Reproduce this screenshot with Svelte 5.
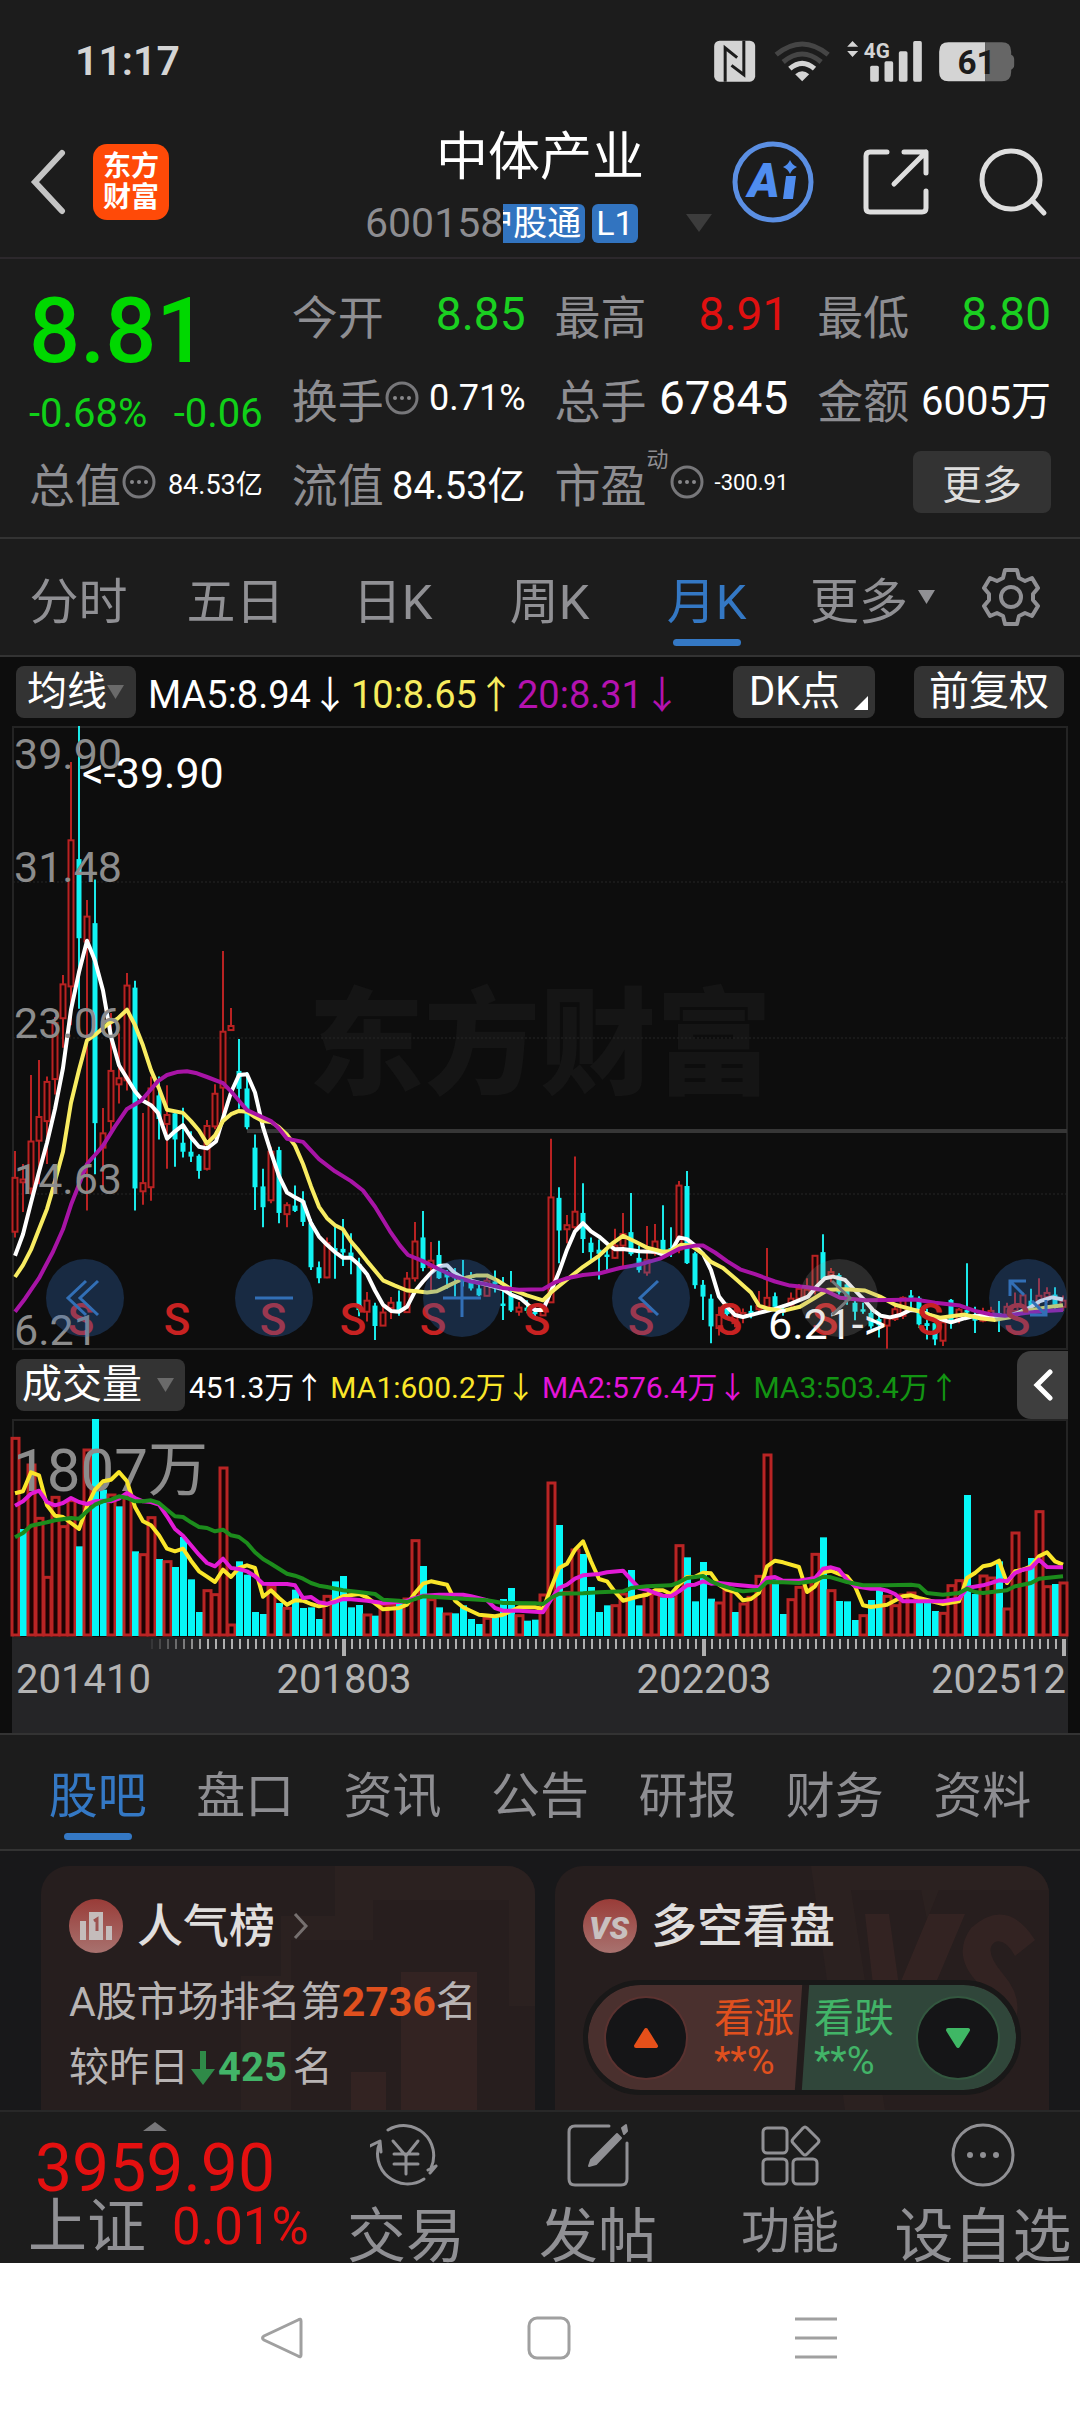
<script>
  const STEP = 8;
  const X0 = 15;
  const xAt = (i) => X0 + i * STEP;

  // Levels are stored in ticks measured down from the top of each pane.
  const priceY = (v) => (v - 17) / 2.45;
  const volumeY = (v) => (v - 243) / 3;

  // One entry per month: direction, high, body top, body bottom, low.
  const candles = `
u 1058 1124 1256 1270|u 1090 1128 1135 1208|u 872 1035 1150 1165|u 835 975 1033 1140|u 876 889 985 1090|u 730 745 882 920
u 627 650 733 805|u 105 297 655 750|d 17 343 537 710|u 443 484 545 1204|d 393 500 990 1115|u 953 1015 1050 1145
u 720 862 985 1008|u 770 880 895 942|u 622 653 885 910|d 641 658 1150 1204|u 965 1137 1157 1190|u 876 905 1147 1180
d 876 922 980 1030|u 897 970 992 1102|d 960 966 1030 1097|d 952 1038 1060 1074|d 1010 1060 1072 1085|d 1066 1070 1107 1126
u 982 997 1102 1106|u 895 918 998 1005|u 568 766 903 985|u 708 752 762 763|d 784 862 906 955|d 865 905 1000 1005
d 1018 1050 1147 1203|d 1102 1145 1196 1245|u 1048 1060 1179 1186|d 1048 1056 1210 1235|u 1184 1191 1213 1245|d 1143 1192 1205 1208
d 1157 1180 1232 1242|d 1225 1235 1343 1350|d 1329 1343 1370 1382|u 1270 1284 1368 1370|d 1240 1296 1304 1371|d 1225 1298 1307 1340
d 1260 1307 1322 1360|d 1320 1335 1448 1463|u 1404 1425 1452 1476|d 1430 1437 1487 1521|u 1440 1454 1486 1487|u 1416 1430 1443 1470
d 1400 1427 1450 1462|u 1355 1371 1453 1455|u 1232 1280 1370 1378|d 1205 1270 1345 1353|u 1281 1327 1343 1400|d 1278 1313 1370 1372
d 1350 1359 1368 1396|d 1345 1362 1370 1415|d 1325 1366 1378 1390|d 1355 1380 1395 1400|d 1380 1395 1412 1414|u 1368 1376 1413 1414
d 1351 1378 1385 1405|d 1367 1432 1438 1472|d 1352 1409 1449 1453|u 1428 1442 1452 1462|d 1424 1442 1450 1456|d 1440 1452 1458 1463
u 1434 1440 1461 1462|u 1028 1172 1429 1430|d 1147 1173 1253 1333|u 1215 1240 1250 1284|u 1072 1207 1245 1250|d 1137 1210 1274 1308
d 1270 1283 1306 1330|d 1275 1300 1310 1373|d 1300 1312 1318 1350|u 1249 1290 1320 1322|u 1210 1262 1290 1344|d 1161 1257 1311 1315
d 1290 1320 1350 1356|u 1242 1325 1356 1364|u 1237 1280 1308 1315|d 1191 1276 1305 1310|d 1245 1296 1304 1318|u 1132 1143 1300 1309
d 1107 1144 1333 1335|d 1305 1309 1387 1396|d 1374 1386 1415 1472|d 1409 1420 1488 1529|u 1440 1460 1492 1510|d 1430 1440 1458 1470
u 1440 1450 1480 1490|u 1444 1455 1462 1480|d 1437 1450 1460 1468|u 1401 1438 1446 1450|u 1296 1418 1440 1450|d 1405 1414 1440 1445
d 1435 1445 1452 1462|u 1405 1420 1435 1440|u 1384 1396 1420 1425|u 1370 1398 1415 1420|u 1313 1315 1400 1410|d 1262 1306 1372 1375
u 1345 1355 1362 1380|d 1358 1362 1405 1410|d 1375 1385 1425 1435|d 1420 1430 1452 1473|d 1430 1446 1452 1457|d 1438 1455 1488 1494
d 1460 1470 1485 1515|u 1460 1468 1486 1543|u 1436 1446 1470 1475|u 1414 1418 1462 1470|d 1399 1412 1418 1443|d 1414 1418 1483 1492
d 1445 1480 1487 1520|d 1470 1480 1520 1534|u 1470 1478 1523 1536|d 1421 1423 1480 1494|u 1443 1447 1470 1480|d 1333 1448 1454 1464
d 1440 1460 1474 1504|u 1442 1455 1474 1478|u 1440 1450 1465 1470|d 1426 1455 1462 1502|u 1430 1440 1460 1465|u 1405 1440 1450 1460
u 1405 1412 1440 1450|d 1396 1425 1440 1450|u 1370 1413 1425 1450|u 1392 1406 1416 1430|d 1392 1410 1435 1445|u 1412 1425 1440 1450`
    .trim()
    .split(/[|\n]/)
    .map((row, i) => {
      const [dir, high, top, bottom, low] = row.split(' ');
      return {
        x: xAt(i),
        up: dir === 'u',
        high: priceY(+high),
        top: priceY(+top),
        bottom: priceY(+bottom),
        low: priceY(+low)
      };
    });

  const linePath = (points, fx, fy) =>
    points
      .trim()
      .split(/\s+/)
      .map((p) => p.split(',').map(Number))
      .map(([x, v], i) => `${i ? 'L' : 'M'}${fx(x)} ${fy(v).toFixed(1)}`)
      .join('');

  const same = (x) => x;

  const priceLines = [
    { cls: 'white', d: linePath('15,1315 23,1262 31,1185 39,1110 47,1038 55,955 63,855 71,712 79,620 87,543 95,592 103,665 111,778 119,848 127,880 135,912 143,935 151,946 158,965 167,1028 175,1010 183,995 191,1025 199,1048 207,1052 216,1035 223,978 231,915 239,872 247,870 255,915 263,1000 271,1062 279,1120 287,1160 295,1172 303,1182 311,1235 319,1268 327,1288 335,1306 343,1320 351,1320 359,1337 367,1360 375,1400 383,1435 391,1450 399,1452 407,1440 415,1402 423,1378 431,1357 439,1340 447,1338 455,1358 463,1370 471,1376 487,1386 503,1397 511,1410 521,1420 528,1435 535,1448 543,1448 551,1402 559,1355 567,1300 575,1255 583,1235 591,1255 599,1268 607,1285 615,1299 623,1298 639,1304 655,1305 663,1312 671,1305 679,1270 687,1274 695,1290 703,1310 711,1350 719,1415 727,1440 735,1460 743,1465 759,1455 775,1445 791,1432 808,1415 816,1392 825,1370 833,1366 845,1374 855,1400 865,1425 873,1448 881,1462 890,1466 900,1460 910,1448 920,1450 935,1466 951,1478 965,1468 975,1462 990,1462 1005,1464 1018,1455 1030,1442 1040,1426 1052,1417 1063,1422', same, priceY) },
    { cls: 'yellow', d: linePath('15,1367 23,1338 31,1300 39,1250 47,1200 53,1150 63,1060 71,940 79,860 87,787 97,770 109,745 117,735 127,712 135,750 143,800 151,860 159,905 167,957 183,965 191,985 199,1008 207,1040 215,1020 223,985 231,968 239,960 247,962 255,975 263,985 271,987 279,1000 287,1018 295,1045 303,1090 311,1145 319,1195 327,1223 335,1240 343,1250 351,1280 359,1303 367,1328 383,1375 395,1388 407,1400 417,1402 427,1405 437,1402 447,1390 457,1378 467,1368 477,1363 487,1363 497,1375 512,1398 527,1412 543,1424 551,1405 567,1373 583,1342 599,1315 612,1285 623,1266 635,1280 647,1295 663,1305 671,1303 681,1288 691,1290 703,1310 711,1330 723,1345 735,1370 751,1405 759,1437 767,1444 783,1450 800,1440 815,1418 828,1398 845,1397 865,1400 880,1415 895,1435 915,1448 927,1458 940,1467 955,1462 965,1459 980,1468 995,1472 1010,1466 1025,1450 1045,1442 1063,1436', same, priceY) },
    { cls: 'purple', d: linePath('15,1452 25,1420 39,1370 53,1305 63,1250 71,1190 79,1140 87,1090 95,1068 103,1045 115,998 127,955 141,935 150,910 158,887 167,872 177,865 187,863 197,868 207,877 223,892 231,912 239,935 247,958 255,967 271,985 279,1003 287,1028 303,1036 319,1078 335,1108 351,1132 363,1155 375,1195 390,1255 400,1290 408,1313 423,1328 439,1348 455,1366 471,1378 487,1385 503,1394 519,1398 543,1397 555,1380 567,1370 583,1362 600,1358 620,1345 640,1336 660,1322 680,1297 695,1290 703,1290 715,1307 727,1328 740,1348 755,1360 775,1378 790,1388 808,1392 825,1400 840,1418 865,1424 890,1423 915,1422 935,1430 960,1437 975,1450 990,1458 1005,1462 1025,1455 1045,1450 1063,1448', same, priceY) }
  ];

  const volumes = `u298 d573 u378 u538 u715 u475 u563 u485 d625 u333 d243 d455 u468 d505 u470 d640 u647 u536 d663 u668 d687 d597 d724 d822 u755 u767 u387 u858 d670 d710 d822 d828 u745 d795 u808 d755 d810 d808 d843 u772 d730 d714 d808 d801 u828 d833 u798 u798 d795 u780 u605 d684 u782 d808 u825 d826 d802 d843 d858 u838 d838 d783 d750 u830 d848 d845 u768 u432 d561 u760 u633 d648 d747 d822 d802 u800 u765 d696 d802 u765 u765 d778 d778 u620 d658 d790 d672 d782 u792 u755 d822 u795 u775 u712 u348 d725 d828 u782 u745 u728 u646 d598 u755 d789 d790 d846 u830 d786 d755 u772 u800 u768 u762 d790 d790 d819 u823 u740 u725 d471 d768 u711 u717 d670 u810 u582 u690 d660 u518 u743 d738 u732`
    .split(' ')
    .map((s, i) => ({ x: xAt(i), up: s[0] === 'u', top: volumeY(+s.slice(1)) }));
  const BASE = 217;

  const volumeLines = [
    { cls: 'vyellow', d: linePath('0,466 1,460 2,403 3,412 4,502 5,533 6,537 7,555 8,573 9,505 10,455 11,430 12,425 13,402 14,430 15,507 16,550 17,562 18,592 19,632 20,640 21,632 22,668 23,700 24,716 25,732 26,695 27,717 28,690 29,682 30,690 31,776 32,757 33,780 34,800 35,787 36,788 37,798 38,805 39,800 41,775 43,768 44,778 46,814 48,810 49,800 50,765 51,737 52,730 54,740 55,788 56,808 58,830 60,835 61,830 63,808 65,808 66,814 67,750 68,690 69,677 70,635 71,610 72,670 73,723 74,730 75,762 76,788 78,775 79,770 80,757 81,757 82,768 83,740 84,717 85,716 86,704 87,706 88,740 89,755 90,762 91,787 92,783 93,765 94,685 95,668 96,673 98,687 99,762 100,745 101,703 102,698 103,708 104,715 105,745 106,802 107,807 109,800 111,775 112,772 113,780 115,792 116,798 118,790 119,720 120,705 121,685 122,680 123,668 124,735 125,700 126,695 127,685 128,655 129,643 130,670 131,680', xAt, volumeY) },
    { cls: 'magenta', d: linePath('0,503 1,490 2,467 3,458 4,492 5,502 6,495 7,480 8,492 9,498 10,490 11,488 12,490 13,482 14,465 15,480 16,490 17,492 18,500 19,535 20,573 21,593 22,622 23,650 24,675 25,685 26,662 27,690 28,693 29,700 30,715 31,737 32,738 34,738 35,742 36,780 37,777 38,793 39,797 40,792 41,783 42,784 44,788 46,795 48,792 49,788 50,780 51,773 53,770 56,770 57,775 59,787 60,810 61,818 63,818 66,823 67,785 68,750 69,740 70,722 71,712 73,708 74,703 76,698 77,725 78,750 79,755 80,765 81,773 82,775 83,760 84,742 85,740 86,730 87,737 88,735 90,740 92,745 93,748 94,720 95,717 96,728 98,728 100,720 101,692 102,688 103,695 104,725 105,745 107,752 108,752 109,758 110,768 111,790 114,790 116,790 118,782 119,750 121,742 122,735 123,727 124,730 125,705 126,695 127,690 128,665 129,687 131,688', xAt, volumeY) },
    { cls: 'green', d: linePath('0,598 1,585 2,563 4,553 5,547 7,540 8,542 9,520 10,500 11,490 12,485 13,475 14,480 15,490 16,490 17,487 18,495 19,515 20,535 21,537 22,553 23,567 24,570 25,580 26,575 27,592 28,597 29,615 30,643 31,663 32,677 33,692 34,707 35,713 36,722 37,735 38,743 39,747 41,757 43,762 45,768 46,785 48,788 49,792 50,783 51,775 53,778 56,782 59,787 61,795 65,796 66,798 67,780 68,767 71,766 73,763 76,760 77,750 79,745 82,742 83,733 84,720 86,714 87,730 88,740 90,755 91,760 93,755 94,732 96,733 98,735 100,728 101,716 102,718 104,732 106,742 109,742 112,740 113,743 114,765 116,770 118,765 119,752 120,762 121,765 124,757 125,745 127,735 128,722 131,715', xAt, volumeY) }
  ];

  const priceLabels = [
    { y: 43, t: '39.90' },
    { y: 156, t: '31.48' },
    { y: 312, t: '23.06' },
    { y: 468, t: '14.63' },
    { y: 619, t: '6.21' }
  ];
  const sells = [81, 177, 273, 353, 433, 537, 641, 729, 825, 930, 1017];
  const ticks = Array.from({ length: 115 }, (_, k) => ({
    x: 152 + k * STEP,
    opacity: Math.min(1, (k + 1) / 8),
    tall: [344, 704, 1064].includes(152 + k * STEP)
  }));

  const periods = ['分时', '五日', '日K', '周K', '月K'];
  let period = $state('月K');
  const sections = ['股吧', '盘口', '资讯', '公告', '研报', '财务', '资料'];
  let section = $state('股吧');
</script>

{#snippet dots()}
  <svg class="dots" viewBox="0 0 36 36" aria-hidden="true">
    <circle cx="18" cy="18" r="15" fill="none" stroke="#77777a" stroke-width="3" />
    <circle cx="11" cy="18" r="2" fill="#88888b" /><circle cx="18" cy="18" r="2" fill="#88888b" /><circle cx="25" cy="18" r="2" fill="#88888b" />
  </svg>
{/snippet}

<div class="app">
  <div class="status">
    <span class="clock">11:17</span>
    <svg viewBox="60 50 920 150" class="status-icons" aria-hidden="true">
      <rect x="69" y="64" width="123" height="123" rx="16" fill="#d4d4d4" />
      <path d="M102 187V86L138 115M158 64V166L121 138" fill="none" stroke="#1c1c1c" stroke-width="9" />
      <g fill="none" stroke-width="15">
        <path d="M255 106Q333 42 411 106" stroke="#454545" />
        <path d="M276 128Q333 80 390 128" stroke="#454545" />
        <path d="M296 148Q333 116 370 148" stroke="#d4d4d4" />
      </g>
      <path d="M312 165Q333 146 354 165L333 186Z" fill="#d4d4d4" />
      <path d="M468 82L484 65L501 82ZM468 95L484 113L501 95Z" fill="#d4d4d4" />
      <text x="518" y="116" class="net">4G</text>
      <g fill="#d4d4d4">
        <rect x="537" y="139" width="26" height="48" rx="5" /><rect x="580" y="126" width="26" height="61" rx="5" />
        <rect x="623" y="96" width="26" height="91" rx="5" /><rect x="666" y="65" width="26" height="122" rx="5" />
      </g>
      <path d="M772 69H882V186H772Q744 186 744 158V97Q744 69 772 69Z" fill="#d4d4d4" />
      <path d="M882 69H932Q960 69 960 97V106Q969 110 969 120V138Q969 147 960 151V158Q960 186 932 186H882Z" fill="#666" />
      <text x="799" y="164" class="batt">61</text>
    </svg>
  </div>

  <header class="top">
    <div class="left">
      <button class="plain" aria-label="返回">
        <svg width="38" height="66" viewBox="0 0 38 66"><path d="M33 4L6 33L33 62" fill="none" stroke="#c4c4c4" stroke-width="6" stroke-linecap="round" /></svg>
      </button>
      <a class="logo" href="#home"><span>东方</span><span>财富</span></a>
    </div>
    <div class="name">
      <h1>中体产业</h1>
      <div class="code">
        <span>600158</span><span class="tag cut"><i>沪股通</i></span><span class="tag l1">L1</span>
        <svg class="drop" width="26" height="18" viewBox="0 0 26 18"><path d="M0 0H26L13 18Z" fill="#3c3c3c" /></svg>
      </div>
    </div>
    <div class="right">
      <button class="plain" aria-label="Ai">
        <svg width="82" height="82" viewBox="0 0 82 82">
          <circle cx="41" cy="41" r="38" fill="none" stroke="#5b8fe3" stroke-width="5" />
          <text x="16" y="56" class="ai">A</text>
          <path d="M54 35H64L61 58H51ZM58 19Q60 24 65 26Q60 28 58 33Q56 28 51 26Q56 24 58 19Z" fill="#4f8df0" />
        </svg>
      </button>
      <button class="plain" aria-label="分享">
        <svg width="68" height="68" viewBox="0 0 68 68" fill="none" stroke="#dedede" stroke-width="5" stroke-linecap="round" stroke-linejoin="round">
          <path d="M25 4H8Q4 4 4 8V60Q4 64 8 64H60Q64 64 64 60V43M42 4H64V25M64 4L32 36" />
        </svg>
      </button>
      <button class="plain" aria-label="搜索">
        <svg width="70" height="70" viewBox="0 0 70 70" fill="none" stroke="#dedede" stroke-width="5" stroke-linecap="round"><circle cx="33" cy="33" r="29" /><path d="M54 53L66 66" /></svg>
      </button>
    </div>
  </header>

  <section class="quote">
    <div class="price">
      <strong>8.81</strong>
      <div class="delta"><span>-0.68%</span><span>-0.06</span></div>
    </div>
    <div class="cell"><span class="k">今开</span><span class="v g s46">8.85</span></div>
    <div class="cell"><span class="k">最高</span><span class="v r s46">8.91</span></div>
    <div class="cell"><span class="k">最低</span><span class="v g s46">8.80</span></div>
    <div class="cell"><span class="k">换手</span>{@render dots()}<span class="v s36">0.71%</span></div>
    <div class="cell"><span class="k">总手</span><span class="v s46">67845</span></div>
    <div class="cell"><span class="k">金额</span><span class="v s40">6005万</span></div>
    <div class="cell"><span class="k">总值</span>{@render dots()}<span class="v s27">84.53亿</span></div>
    <div class="cell"><span class="k">流值</span><span class="v s38">84.53亿</span></div>
    <div class="cell"><span class="k">市盈</span><sup>动</sup>{@render dots()}<span class="v s22">-300.91</span></div>
    <div class="cell"><button class="more">更多</button></div>
  </section>

  <nav class="periods">
    {#each periods as p}
      <button class:active={p === period} onclick={() => (period = p)}>{p}</button>
    {/each}
    <button class="extra">更多<svg width="17" height="14" viewBox="0 0 17 14"><path d="M0 0H17L8.5 14Z" fill="#909094" /></svg></button>
    <button class="gear" aria-label="设置">
      <svg width="60" height="60" viewBox="0 0 60 60" fill="none" stroke="#909094" stroke-width="4" stroke-linejoin="round">
        <path d="M24 3H36L38 11L44 14L51 11L57 21L52 27V33L57 39L51 49L44 46L38 49L36 57H24L22 49L16 46L9 49L3 39L8 33V27L3 21L9 11L16 14L22 11Z" />
        <circle cx="30" cy="30" r="10" />
      </svg>
    </button>
  </nav>

  <main>
    <section class="charts">
      <div class="bar">
        <button class="chip ma">均线<svg width="17" height="14" viewBox="0 0 17 14"><path d="M0 0H17L8.5 14Z" fill="#6a6a6a" /></svg></button>
        <span class="white-t">MA5:8.94↓</span><span class="yellow-t">10:8.65↑</span><span class="purple-t">20:8.31↓</span>
        <button class="chip dk">DK点<svg width="14" height="14" viewBox="0 0 14 14"><path d="M14 0V14H0Z" fill="#fff" /></svg></button>
        <button class="chip fq">前复权</button>
      </div>

      <div class="pane">
        <svg class="plot" viewBox="0 0 1080 624" role="img" aria-label="月K线">
          <text x="540" y="359" class="mark">东方财富</text>
          <rect x="13" y="1" width="1054" height="622" fill="none" stroke="#242424" stroke-width="2" />
          {#each [156, 312, 468] as y}
            <path d="M13 {y}H1067" stroke="#262626" stroke-width="1" stroke-dasharray="2 2" />
          {/each}
          <path d="M247 405H1067" stroke="#363636" stroke-width="4" />
          {#each candles as c}
            {#if c.up}
              <path d="M{c.x} {c.high}V{c.low}" stroke="#b92222" stroke-width="2" />
              <rect x={c.x - 2.5} y={c.top} width="5" height={Math.max(2, c.bottom - c.top)} fill="#180505" stroke="#b92222" stroke-width="2" />
            {:else}
              <path d="M{c.x} {c.high}V{c.low}" stroke="#1be9e9" stroke-width="2" />
              <rect x={c.x - 2.5} y={c.top} width="5" height={Math.max(2, c.bottom - c.top)} fill="#12f3f3" />
            {/if}
          {/each}
          {#each priceLines as l}
            <path class="ln {l.cls}" d={l.d} />
          {/each}
          {#each sells as x}
            <text {x} y="609" class="sell">S</text>
          {/each}
          {#each priceLabels as l}
            <text x="14" y={l.y} class="lbl">{l.t}</text>
          {/each}
          <text x="82" y="62" class="lbl hi">&lt;-39.90</text>
          <text x="768" y="613" class="lbl hi">6.21-&gt;</text>
        </svg>
        <div class="tools">
          <button aria-label="最早"><svg viewBox="0 0 78 78"><path d="M40 22L22 39L40 56M52 22L34 39L52 56" /></svg></button>
          <button aria-label="缩小"><svg viewBox="0 0 78 78"><path d="M20 39H58" /></svg></button>
          <button aria-label="放大"><svg viewBox="0 0 78 78"><path d="M20 39H58M39 20V58" /></svg></button>
          <button aria-label="左移"><svg viewBox="0 0 78 78"><path d="M46 22L28 39L46 56" /></svg></button>
          <button class="off" aria-label="右移"><svg viewBox="0 0 78 78"><path d="M32 22L50 39L32 56" /></svg></button>
          <button aria-label="全屏"><svg viewBox="0 0 78 78"><path d="M21 37V22H37M22 23L35 36M57 41V56H41M56 55L43 42" /></svg></button>
        </div>
      </div>

      <div class="bar vol">
        <button class="chip cj">成交量<svg width="17" height="14" viewBox="0 0 17 14"><path d="M0 0H17L8.5 14Z" fill="#6a6a6a" /></svg></button>
        <span class="white-t">451.3万↑</span><span class="vy-t">MA1:600.2万↓</span><span class="mg-t">MA2:576.4万↓</span><span class="gr-t">MA3:503.4万↑</span>
        <button class="fold" aria-label="展开"><svg width="20" height="32" viewBox="0 0 20 32"><path d="M17 3L4 16L17 29" fill="none" stroke="#fff" stroke-width="5" stroke-linecap="round" /></svg></button>
      </div>

      <svg class="plot" viewBox="0 0 1080 314" role="img" aria-label="成交量">
        <rect x="13" y="1" width="1054" height="218" fill="none" stroke="#242424" stroke-width="2" />
        {#each volumes as b}
          {#if b.up}
            <rect x={b.x - 3} y={b.top + 1} width="7" height={BASE - b.top - 2} fill="#1c0303" stroke="#b92424" stroke-width="3" />
          {:else}
            <rect x={b.x - 3} y={b.top} width="7" height={BASE - b.top} fill="#06f7f7" />
          {/if}
        {/each}
        <text x="13" y="72" class="vlbl">1807万</text>
        {#each volumeLines as l}
          <path class="ln {l.cls}" d={l.d} />
        {/each}
        <rect x="12" y="220" width="1056" height="94" fill="#252527" />
        {#each ticks as t}
          <path d="M{t.x} 220V{t.tall ? 237 : 230}" stroke="#b0b0b0" stroke-width={t.tall ? 4 : 2} opacity={t.opacity} />
        {/each}
        <text x="16" y="274" class="date">201410</text>
        <text x="344" y="274" class="date mid">201803</text>
        <text x="704" y="274" class="date mid">202203</text>
        <text x="1066" y="274" class="date end">202512</text>
      </svg>
    </section>

    <nav class="sections">
      {#each sections as s}
        <button class:active={s === section} onclick={() => (section = s)}>{s}</button>
      {/each}
    </nav>

    <section class="cards">
      <article class="card">
        <svg class="ghost" viewBox="0 0 494 244" aria-hidden="true"><path d="M294 0V50H240V110H200V244H494V0Z" fill="#2b2120" /><path d="M332 34H468V140H494V244H250V74H332Z" fill="#271e1e" /><path d="M360 106H436V244H360ZM310 206H345V244H310Z" fill="#332322" /></svg>
        <h2>
          <svg width="54" height="54" viewBox="0 0 54 54" aria-hidden="true">
            <defs><linearGradient id="badge" x1="0" y1="0" x2="0" y2="1"><stop offset="0" stop-color="#993c38" /><stop offset="1" stop-color="#a8726f" /></linearGradient></defs>
            <circle cx="27" cy="27" r="27" fill="url(#badge)" />
            <path d="M11 22H17V41H11ZM20 13H34V41H20ZM37 27H43V41H37Z" fill="#c4bcbb" />
            <path d="M25 22L28 20V32" fill="none" stroke="#9c5350" stroke-width="3" />
          </svg>
          人气榜
          <svg class="go" width="16" height="28" viewBox="0 0 16 28"><path d="M2 2L13 14L2 26" fill="none" stroke="#76706f" stroke-width="3" /></svg>
        </h2>
        <p>A股市场排名第<b class="o">2736</b>名</p>
        <p class="diff">较昨日<svg width="26" height="34" viewBox="0 0 26 34"><path d="M10 0H16V18H25L13 34L1 18H10Z" fill="#2f8a48" /></svg><b class="gn">425</b>名</p>
      </article>
      <article class="card">
        <svg class="ghost" viewBox="0 0 494 244" aria-hidden="true"><path d="M256 0H494V244H290Z" fill="#2b2120" /><path d="M296 24H366L372 54L384 24H494V244H330Z" fill="#271e1e" /><path d="M310 48H334L344 120L374 48H410L350 190H326ZM480 74Q452 30 416 62Q396 90 424 118Q446 140 424 150Q408 152 396 140L384 176Q420 200 450 174Q476 140 448 108Q428 84 440 76Q450 72 460 90Z" fill="#332322" /></svg>
        <h2>
          <svg width="54" height="54" viewBox="0 0 54 54" aria-hidden="true"><circle cx="27" cy="27" r="27" fill="url(#badge)" /><text x="26" y="40" class="vs">VS</text></svg>
          多空看盘
        </h2>
        <div class="pill">
          <button class="round up" aria-label="看涨"><svg width="26" height="22" viewBox="0 0 26 22"><path d="M13 3L23 19H3Z" fill="#e6501a" stroke="#e6501a" stroke-width="4" stroke-linejoin="round" /></svg></button>
          <div class="vote o"><span>看涨</span><small>**%</small></div>
          <div class="vote gn"><span>看跌</span><small>**%</small></div>
          <button class="round down" aria-label="看跌"><svg width="26" height="22" viewBox="0 0 26 22"><path d="M13 19L23 3H3Z" fill="#3fb765" stroke="#3fb765" stroke-width="4" stroke-linejoin="round" /></svg></button>
        </div>
      </article>
    </section>
  </main>

  <footer>
    <a class="index" href="#index">
      <svg width="24" height="9" viewBox="0 0 24 9"><path d="M12 0L24 9H0Z" fill="#77777a" /></svg>
      <span class="pts">3959.90</span>
      <span class="row"><span class="sh">上证</span><span class="pct">0.01%</span></span>
    </a>
    <a href="#trade">
      <svg class="fi" viewBox="0 0 72 66"><path d="M18 8A30 30 0 0 1 61 46M54 57A30 30 0 0 1 10 20M66 44L58 48M66 44L60 51M0 24L10 19L11 30" /><path d="M23 19L36 34L48 19M36 34V52M24 32H48M24 42H48" /></svg>
      <span>交易</span>
    </a>
    <a href="#post">
      <svg class="fi" viewBox="0 0 72 66"><path d="M47 4H13Q7 4 7 10V57Q7 63 13 63H59Q65 63 65 57V21" /><path d="M55 12L59 16L34 42L27 44L29 38ZM60 6L64 3L65 9L62 12Z" fill="#909094" stroke-width="2" /></svg>
      <span>发帖</span>
    </a>
    <a href="#apps">
      <svg class="fi" viewBox="0 0 72 66"><rect x="9" y="6" width="24" height="25" rx="4" /><rect x="9" y="37" width="24" height="25" rx="4" /><rect x="39" y="37" width="24" height="25" rx="4" /><path d="M49 6Q51 4 53 6L64 17Q66 19 64 21L53 32Q51 34 49 32L39 21Q37 19 39 17Z" /></svg>
      <span class="small">功能</span>
    </a>
    <a href="#watch">
      <svg class="fi" viewBox="0 0 72 66"><circle cx="36" cy="33" r="30" /><g fill="#909094" stroke="none"><circle cx="23" cy="33" r="3" /><circle cx="36" cy="33" r="3" /><circle cx="49" cy="33" r="3" /></g></svg>
      <span>设自选</span>
    </a>
  </footer>

  <div class="sysnav">
    <button class="plain" aria-label="后退"><svg width="44" height="44" viewBox="0 0 44 44"><path d="M38 4Q41 2 41 5V39Q41 42 38 40L4 24Q1 22 4 20Z" /></svg></button>
    <button class="plain" aria-label="主页"><svg width="44" height="44" viewBox="0 0 44 44"><rect x="2" y="2" width="40" height="40" rx="8" /></svg></button>
    <button class="plain" aria-label="最近"><svg width="44" height="44" viewBox="0 0 44 44"><path d="M1 3H43M1 22H43M1 41H43" /></svg></button>
  </div>
</div>

<style>
  :global(body) { margin: 0; background: #1c1c1c; }
  .app {
    height: 100vh;
    display: flex;
    flex-direction: column;
    overflow: hidden;
    background: #1c1c1c;
    color: #fff;
    font-family: Roboto, 'Noto Sans CJK SC', sans-serif;
  }
  button { font: inherit; color: inherit; background: none; border: 0; padding: 0; cursor: pointer; }
  a { color: inherit; text-decoration: none; }
  svg { display: block; flex: none; }
  .plain { display: flex; }

  .status { height: 101px; padding: 20px 62px 0 75px; box-sizing: border-box; display: flex; align-items: center; justify-content: space-between; flex: none; }
  .clock { font: 600 41px/44px Roboto, sans-serif; color: #d4d4d4; }
  .status-icons { width: 307px; height: 50px; }
  .net { font: 700 62px Roboto, sans-serif; fill: #d4d4d4; }
  .batt { font: 700 100px Roboto, sans-serif; fill: #1c1c1c; }

  .top { height: 158px; box-sizing: border-box; display: grid; grid-template-columns: 1fr 350px 1fr; border-bottom: 2px solid #2c282c; flex: none; }
  .left { display: flex; align-items: center; gap: 26px; padding: 6px 0 0 29px; }
  .logo { width: 76px; height: 76px; border-radius: 14px; background: #ff4a08; font-size: 28px; line-height: 31px; font-weight: 700; display: flex; flex-direction: column; align-items: center; justify-content: center; }
  .name { padding-top: 27px; }
  h1 { margin: 0 0 13px; font-size: 52px; line-height: 60px; font-weight: 400; text-align: center; }
  .code { display: flex; align-items: center; color: #8d8d91; font-size: 41px; line-height: 44px; }
  .tag { background: #3274c0; color: #fff; font-size: 34px; line-height: 39px; border-radius: 6px; }
  .cut { width: 82px; border-radius: 0 6px 6px 0; overflow: hidden; display: flex; justify-content: flex-end; padding-right: 4px; box-sizing: border-box; }
  .cut i { font-style: normal; flex: none; }
  .l1 { margin-left: 7px; padding: 0 4px; }
  .drop { margin-left: auto; margin-right: 3px; }
  .right { display: flex; align-items: center; justify-content: flex-end; gap: 48px; padding: 6px 32px 0 0; }
  .ai { font: italic 900 48px Roboto, sans-serif; fill: #4f8df0; }

  .quote { display: grid; grid-template-columns: repeat(4, 1fr); grid-auto-rows: 84px; column-gap: 29px; padding: 13px 29px; border-bottom: 2px solid #333; flex: none; }
  .price { grid-row: span 2; color: #00d800; display: flex; flex-direction: column; }
  .price strong { font-size: 90px; line-height: 108px; font-weight: 500; margin-top: 6px; }
  .delta { display: flex; justify-content: space-between; font-size: 40px; line-height: 56px; color: #10d018; }
  .cell { display: flex; align-items: center; min-width: 0; white-space: nowrap; }
  .k { font-size: 46px; color: #8e8e92; }
  .v { margin-left: auto; }
  .g { color: #1ad021; }
  .r { color: #e01010; }
  .s46 { font-size: 46px; }
  .s40 { font-size: 40px; }
  .s38 { font-size: 38px; }
  .s36 { font-size: 36px; }
  .s27 { font-size: 27px; }
  .s22 { font-size: 22px; }
  .dots { width: 36px; height: 36px; }
  .cell sup { font-size: 22px; line-height: 24px; align-self: flex-start; color: #8e8e92; margin-top: 8px; }
  .more { margin-left: auto; width: 138px; height: 62px; border-radius: 8px; background: #333; color: #ddd; font-size: 40px; }

  .periods { display: flex; height: 116px; border-bottom: 2px solid #333; flex: none; }
  .periods button { flex: 157; font-size: 49px; color: #909094; display: flex; align-items: center; justify-content: center; position: relative; white-space: nowrap; gap: 10px; }
  .periods button.extra { padding-left: 18px; flex: 139; }
  .periods button.gear { flex: 138; }
  .active::after { content: ''; position: absolute; left: 50%; bottom: 9px; width: 68px; margin-left: -34px; height: 7px; border-radius: 4px; background: #3478c4; }
  .periods .active, .sections .active { color: #3478c4; }

  main { flex: 1; min-height: 0; overflow: hidden; background: #18181a; }
  .charts { background: #0d0d0d; }
  .bar { height: 69px; display: flex; align-items: center; padding: 0 16px; font-size: 38px; white-space: nowrap; }
  .bar span { margin-right: 2px; }
  .chip { background: #333; border-radius: 8px; height: 52px; font-size: 40px; line-height: 52px; display: flex; align-items: center; flex: none; }
  .ma { width: 120px; padding-left: 11px; box-sizing: border-box; margin-right: 12px; }
  .dk { width: 142px; justify-content: space-between; padding: 0 7px 0 16px; box-sizing: border-box; margin-left: auto; }
  .dk svg { align-self: flex-end; margin-bottom: 8px; }
  .fq { width: 150px; justify-content: center; margin-left: 39px; }
  .white-t { color: #fff; }
  .yellow-t { color: #f6ec5e; }
  .purple-t { color: #b412b0; }
  .vol { font-size: 30px; padding-right: 12px; }
  .vol span { margin-right: 6px; }
  .cj { width: 169px; justify-content: space-between; padding: 0 11px 0 6px; box-sizing: border-box; margin-right: 4px; }
  .vy-t { color: #fae62a; }
  .mg-t { color: #e414d8; }
  .gr-t { color: #139413; }
  .fold { margin-left: auto; width: 51px; height: 68px; background: #3e3e3e; border-radius: 14px 0 0 14px; display: flex; align-items: center; justify-content: center; }

  .pane { position: relative; }
  .plot { width: 100%; height: auto; }
  .tools { position: absolute; left: 46px; right: 13px; bottom: 13px; display: flex; justify-content: space-between; }
  .tools button { width: 78px; height: 78px; border-radius: 50%; background: rgba(50, 110, 190, 0.3); }
  .tools path { fill: none; stroke: #326fb6; stroke-width: 3; }
  .tools .off { background: rgba(150, 150, 150, 0.22); }
  .tools .off path { stroke: #77777a; }
  .mark { font-size: 116px; font-weight: 900; fill: #151515; text-anchor: middle; }
  .lbl { font-size: 43px; fill: #8c8c8c; }
  .hi { fill: #fff; }
  .sell { font-size: 44px; font-weight: 500; fill: #c82222; text-anchor: middle; }
  .vlbl { font-size: 60px; fill: #8c8c8c; }
  .date { font-size: 40px; fill: #b4b4b4; }
  .mid { text-anchor: middle; }
  .end { text-anchor: end; }
  .ln { fill: none; stroke-width: 4; stroke-linejoin: round; }
  .white { stroke: #fff; }
  .yellow { stroke: #f8ec62; }
  .purple { stroke: #a814a6; }
  .vyellow { stroke: #fae62a; }
  .magenta { stroke: #e21ad6; }
  .green { stroke: #1c8c1c; }

  .sections { display: flex; height: 114px; padding: 0 24px; background: #1c1c1c; border-top: 2px solid #333; border-bottom: 2px solid #333; }
  .sections button { flex: 1; position: relative; font-size: 49px; color: #8e8e92; padding-bottom: 2px; white-space: nowrap; }
  .cards { display: grid; grid-template-columns: 1fr 1fr; gap: 20px; padding: 15px 31px 0 41px; }
  .card { position: relative; height: 300px; border-radius: 28px; background: #261e1e; padding: 33px 28px; box-sizing: border-box; overflow: hidden; }
  .ghost { position: absolute; left: 0; top: 0; width: 100%; }
  h2 { position: relative; margin: 0; height: 54px; line-height: 54px; display: flex; align-items: center; gap: 14px; font-size: 46px; font-weight: 500; color: #e0dedd; }
  .vs { font: italic 900 32px Roboto, sans-serif; fill: #c8c0bf; text-anchor: middle; }
  .go { margin-left: 4px; }
  p { position: relative; margin: 0; font-size: 41px; line-height: 66px; display: flex; align-items: center; color: #b8b4b4; white-space: pre; }
  h2 + p { margin-top: 16px; }
  .diff { font-size: 40px; }
  p svg { margin: 0 2px 0 1px; }
  p b { font-weight: 700; }
  .diff b { margin-right: 6px; }
  .o { color: #e0501e; }
  .gn { color: #42b468; }
  .pill { position: relative; margin-top: 27px; height: 115px; box-sizing: border-box; border: 5px solid #191818; border-radius: 58px; display: flex; align-items: center; padding: 0 16px; background: linear-gradient(94deg, #4a302e calc(50% - 4px), #221c1c calc(50% - 3px), #221c1c calc(50% + 3px), #30463a calc(50% + 4px)) padding-box; }
  .round { width: 84px; height: 84px; box-sizing: border-box; border-radius: 50%; background: #151517; border: 2px solid #5a3230; display: flex; align-items: center; justify-content: center; flex: none; }
  .down { border-color: #33573f; margin-left: auto; }
  .vote { display: flex; flex-direction: column; font-size: 40px; line-height: 46px; margin-left: 26px; }
  .vote + .vote { margin-left: 20px; }
  .vote small { font-size: 38px; line-height: 38px; }

  footer { height: 153px; box-sizing: border-box; border-top: 2px solid #282828; overflow: hidden; display: grid; grid-template-columns: 310fr 192fr 192fr 192fr 194fr; flex: none; color: #909094; }
  footer a { display: flex; flex-direction: column; align-items: center; padding-top: 10px; font-size: 59px; line-height: 98px; white-space: nowrap; }
  footer .small { font-size: 49px; line-height: 88px; }
  .fi { width: 72px; height: 66px; fill: none; stroke: #909094; stroke-width: 3; stroke-linecap: round; stroke-linejoin: round; }
  .pts { font-size: 66px; line-height: 66px; color: #e41010; margin-top: 5px; }
  .row { display: flex; align-items: center; gap: 26px; line-height: 50px; align-self: stretch; padding-left: 28px; }
  .pct { font-size: 51px; line-height: 46px; color: #e41010; }

  .sysnav { height: 149px; background: #fff; display: flex; justify-content: center; align-items: center; gap: 223px; padding-left: 17px; flex: none; }
  .sysnav svg { fill: none; stroke: #a0a0a0; stroke-width: 3; }
</style>
